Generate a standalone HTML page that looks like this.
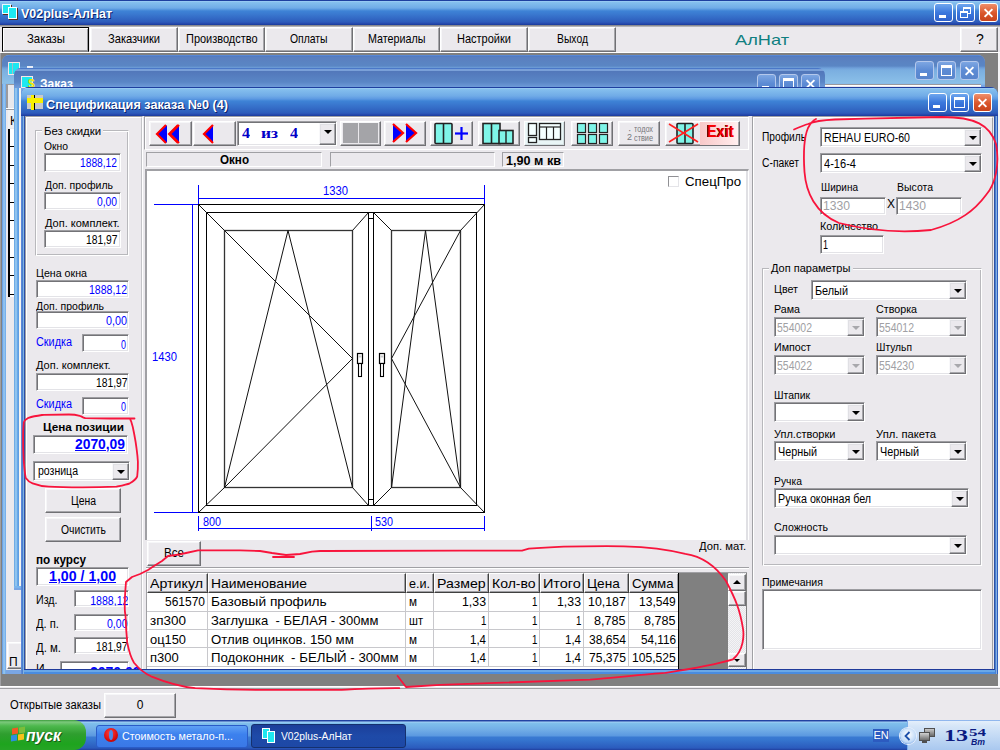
<!DOCTYPE html>
<html><head><meta charset="utf-8">
<style>

*{margin:0;padding:0;box-sizing:border-box}
html,body{width:1000px;height:750px;overflow:hidden;background:#808080;font-family:"Liberation Sans",sans-serif;font-size:11px;color:#000;position:relative}
.a{position:absolute}
.t{position:absolute;white-space:pre;line-height:1}
.face{background:#EBE9ED}
.fld{position:absolute;background:#fff;border:1px solid;border-color:#9d9da1 #fff #fff #9d9da1;box-shadow:inset 1px 1px #737377,inset -1px -1px #e3e3e7}
.btn{position:absolute;background:#EBE9ED;border:1px solid;border-color:#fff #707074 #707074 #fff;box-shadow:inset -1px -1px #a6a6aa,inset 1px 1px #f6f6f8}
.arr{position:absolute;top:1px;right:0;width:17px;bottom:0;background:#EBE9ED;border:1px solid;border-color:#f8f8fa #707074 #707074 #f8f8fa;box-shadow:inset -1px -1px #a6a6aa,inset 1px 1px #e0e0e4}
.arr:after{content:"";position:absolute;left:4px;top:6px;border-left:4px solid transparent;border-right:4px solid transparent;border-top:4px solid #000}
.arr.dis:after{border-top-color:#a8a8ac}
.grp{position:absolute;border:1px solid;border-color:#b8b8bc #fff #fff #b8b8bc;box-shadow:inset 1px 1px #fff,inset -1px -1px #b8b8bc}
.sunk{position:absolute;border:1px solid;border-color:#a0a0a4 #fff #fff #a0a0a4}
.rais{position:absolute;border:1px solid;border-color:#fff #a0a0a4 #a0a0a4 #fff}
.tb-act{background:linear-gradient(to bottom,#1E3F9F 0px,#1E3F9F 1px,#A6D3F7 1px,#86C0EE 2px,#70ABE7 8px,#3E83D6 11px,#3A79D0 14px,#2D5CBB 22px,#2A50B4 23px,#1A3B9C 25px)}
.capbtn{position:absolute;width:19px;height:19px;border:1px solid #fff;border-radius:3px;background:linear-gradient(to bottom,#6ea6ee,#3b78dd 50%,#2f62cc)}
.capbtn.cl{background:linear-gradient(to bottom,#f08f6a,#d9552b 55%,#c8441c)}
.capbtn.ina{border-color:#b4c8ec;background:linear-gradient(to bottom,#7da6e2,#5c8bd4 50%,#5885cc)}
.x:before,.x:after{content:"";position:absolute;left:3px;top:7.5px;width:11px;height:2px;background:#fff;transform:rotate(45deg)}
.x:after{transform:rotate(-45deg)}

</style></head><body>
<div class="a tb-act" style="left:0;top:0;width:1000px;height:25px"></div>
<div class="a" style="left:2px;top:4px;width:9px;height:10px;background:#1ee8f0;border:1px solid #e8f8ff;box-shadow:1px 1px #5a2a1a"></div>
<div class="a" style="left:8px;top:7px;width:9px;height:12px;background:#1ee8f0;border:1px solid #fff;box-shadow:1px 1px #5a2a1a"></div>
<div class="t" style="left:21px;top:8px;font:bold 12px/1 'Liberation Sans';color:#fff;transform:scaleX(1.040);transform-origin:0 0;text-shadow:1px 1px #0a1f6a;">V02plus-АлНат</div>
<div class="capbtn " style="left:934px;top:3px"><div class="a" style="left:4px;top:11px;width:7px;height:3px;background:#fff"></div></div>
<div class="capbtn " style="left:956px;top:3px"><div class="a" style="left:6px;top:3px;width:8px;height:7px;border:1px solid #fff;border-top-width:2px"></div><div class="a" style="left:3px;top:7px;width:8px;height:7px;border:1px solid #fff;border-top-width:2px;background:#3b78dd"></div></div>
<div class="capbtn cl x" style="left:979px;top:3px"></div>
<div class="a face" style="left:0;top:25px;width:1000px;height:28px"></div>
<div class="a" style="left:0;top:25px;width:1000px;height:1px;background:#8c8c90"></div>
<div class="a" style="left:0;top:26px;width:1000px;height:1px;background:#b4b4b8"></div>
<div class="a" style="left:0;top:52px;width:1000px;height:1px;background:#fff"></div>
<div class="btn" style="left:2px;top:27px;width:87px;height:25px;border-color:#000 #000 #8a8a8e #000;box-shadow:inset 1px 1px #fff,inset -1px -1px #9a9a9e"></div>
<div class="t" style="left:27.0px;top:32px;font:13px/1 'Liberation Sans';color:#000;transform:scaleX(0.875);transform-origin:0 0;">Заказы</div>
<div class="btn" style="left:90px;top:27px;width:88px;height:25px;"></div>
<div class="t" style="left:108.0px;top:32px;font:13px/1 'Liberation Sans';color:#000;transform:scaleX(0.857);transform-origin:0 0;">Заказчики</div>
<div class="btn" style="left:178px;top:27px;width:87px;height:25px;"></div>
<div class="t" style="left:185.8px;top:32px;font:13px/1 'Liberation Sans';color:#000;transform:scaleX(0.844);transform-origin:0 0;">Производство</div>
<div class="btn" style="left:265px;top:27px;width:88px;height:25px;"></div>
<div class="t" style="left:290.2px;top:32px;font:13px/1 'Liberation Sans';color:#000;transform:scaleX(0.800);transform-origin:0 0;">Оплаты</div>
<div class="btn" style="left:353px;top:27px;width:87px;height:25px;"></div>
<div class="t" style="left:367.8px;top:32px;font:13px/1 'Liberation Sans';color:#000;transform:scaleX(0.825);transform-origin:0 0;">Материалы</div>
<div class="btn" style="left:440px;top:27px;width:88px;height:25px;"></div>
<div class="t" style="left:457.0px;top:32px;font:13px/1 'Liberation Sans';color:#000;transform:scaleX(0.847);transform-origin:0 0;">Настройки</div>
<div class="btn" style="left:528px;top:27px;width:88px;height:25px;"></div>
<div class="t" style="left:556.5px;top:32px;font:13px/1 'Liberation Sans';color:#000;transform:scaleX(0.797);transform-origin:0 0;">Выход</div>
<div class="t" style="left:734.5px;top:32px;font:15px/1 'Liberation Sans';color:#0f7f80;transform:scaleX(1.214);transform-origin:0 0;">АлНат</div>
<div class="btn" style="left:960px;top:27px;width:38px;height:25px;"></div>
<div class="t" style="left:976.1px;top:32px;font:14px/1 'Liberation Sans';color:#000;">?</div>
<div class="a" style="left:0;top:53px;width:1000px;height:634px;background:#808080"></div>
<div class="a" style="left:998px;top:53px;width:2px;height:634px;background:#f4f4f6"></div>
<div class="a" style="left:0;top:53px;width:1px;height:634px;background:#a0a0a4"></div>
<div class="a" style="left:2px;top:55px;width:983px;height:619px;border-radius:7px 7px 0 0;background:#7aa6e4"></div>
<div class="a" style="left:2px;top:55px;width:983px;height:30px;border-radius:7px 7px 0 0;background:linear-gradient(to bottom,#6a9ae0 0,#4a78c8 1px,#5a7fbf 2px,#5a86c4 11px,#6fa0da 13px,#7aaee0 15px,#8bc0e8 28px,#7fb0e8 30px)"></div>
<div class="a" style="left:2px;top:84px;width:4px;height:590px;background:linear-gradient(to right,#5a94e0,#9ccbf2 50%,#6aa6e8)"></div>
<div class="a face" style="left:6px;top:84px;width:975px;height:586px;border-top:1px solid #9a9a9e"></div>
<div class="a" style="left:6px;top:85px;width:975px;height:1px;background:#fff"></div>
<div class="a" style="left:8px;top:62px;width:12px;height:13px;background:#1ee8f0;border:1px solid #f4e8e8"></div>
<div class="a" style="left:12px;top:63px;width:1px;height:11px;background:#a0c0c8"></div>
<div class="a" style="left:27px;top:66px;width:6px;height:2px;background:#e8eef8"></div>
<div class="capbtn ina" style="left:915px;top:61px"><div class="a" style="left:4px;top:11px;width:7px;height:3px;background:#fff"></div></div>
<div class="capbtn ina" style="left:937px;top:61px"><div class="a" style="left:3px;top:3px;width:11px;height:11px;border:1px solid #fff;border-top-width:3px"></div></div>
<div class="capbtn ina x" style="left:960px;top:61px"></div>
<div class="a" style="left:6px;top:85px;width:9px;height:23px;background:#e8e8ec;border-left:2px solid #9a9a9e"></div>
<div class="a" style="left:6px;top:108px;width:9px;height:1px;background:#fff"></div>
<div class="a" style="left:6px;top:109px;width:9px;height:1px;background:#9a9a9e"></div>
<div class="a" style="left:8px;top:110px;width:7px;height:18px;background:#f0f0f2"></div>
<div class="t" style="left:10px;top:115px;font:12px/1 'Liberation Sans';color:#000;">К</div>
<div class="a" style="left:8px;top:129px;width:7px;height:168px;background:#fff;border-left:2px solid #000;background-image:repeating-linear-gradient(to bottom,#fff 0,#fff 17.4px,#000 17.4px,#000 18.4px)"></div>
<div class="btn" style="left:7px;top:642px;width:16px;height:27px"></div>
<div class="t" style="left:9px;top:656px;font:12px/1 'Liberation Sans';color:#000;">П</div>
<div class="a" style="left:14px;top:68px;width:811px;height:522px;border-radius:7px 7px 0 0;background:#7aa6e4"></div>
<div class="a" style="left:14px;top:68px;width:811px;height:20px;border-radius:7px 7px 0 0;background:linear-gradient(to bottom,#4a78c8 0,#4a78c8 1px,#7aa0d8 1px,#7aa0d8 3px,#5277ba 3px,#5a86c6 14px,#6e9ad8 19px)"></div>
<div class="a" style="left:14px;top:88px;width:5px;height:499px;background:linear-gradient(to right,#5f9fe0,#a2d0f2 40%,#68a8e8 70%,#5a98e0)"></div>
<div class="a" style="left:19px;top:88px;width:2px;height:499px;background:#f6f4f0"></div>
<div class="a" style="left:14px;top:586px;width:7px;height:2px;background:#7ab4ec"></div>
<div class="a" style="left:21px;top:76px;width:12px;height:12px;background:#1ee8f0;border:1px solid #f4e8e8"></div>
<div class="t" style="left:28px;top:78px;font:bold 12px/1 'Liberation Sans';color:#f2e600;">$</div>
<div class="t" style="left:40px;top:77px;font:bold 13px/1 'Liberation Sans';color:#fff;transform:scaleX(0.923);transform-origin:0 0;">Заказ</div>
<div class="capbtn ina" style="left:757px;top:74px"><div class="a" style="left:4px;top:11px;width:7px;height:3px;background:#fff"></div></div>
<div class="capbtn ina" style="left:779px;top:74px"><div class="a" style="left:3px;top:3px;width:11px;height:11px;border:1px solid #fff;border-top-width:3px"></div></div>
<div class="capbtn ina x" style="left:801px;top:74px"></div>
<div class="a" style="left:21px;top:87px;width:977px;height:587px;border-radius:8px 8px 0 0;background:#3a6ad0"></div>
<div class="a" style="left:21px;top:112px;width:1px;height:562px;background:#5a88d8"></div>
<div class="a" style="left:22px;top:112px;width:1px;height:562px;background:#4a80d0"></div>
<div class="a" style="left:23px;top:112px;width:1px;height:562px;background:#82b2e2"></div>
<div class="a" style="left:24px;top:112px;width:1px;height:562px;background:#2a4ea8"></div>
<div class="a" style="left:994px;top:112px;width:1px;height:562px;background:#2e50a0"></div>
<div class="a" style="left:995px;top:112px;width:1px;height:562px;background:#4a80d0"></div>
<div class="a" style="left:996px;top:112px;width:1px;height:562px;background:#88b0e0"></div>
<div class="a" style="left:997px;top:112px;width:1px;height:562px;background:#3060c0"></div>
<div class="a" style="left:24px;top:669px;width:971px;height:1px;background:#1F3A9A"></div>
<div class="a" style="left:24px;top:670px;width:971px;height:1px;background:#6aa8e8"></div>
<div class="a" style="left:24px;top:671px;width:971px;height:1px;background:#6aa8e8"></div>
<div class="a" style="left:24px;top:672px;width:971px;height:1px;background:#4a8ce0"></div>
<div class="a" style="left:24px;top:673px;width:971px;height:1px;background:#4a8ce0"></div>
<div class="a" style="left:21px;top:87px;width:977px;height:29px;border-radius:8px 8px 0 0;background:linear-gradient(to bottom,#1E3F9F 0px,#1E3F9F 1px,#A6D3F7 1px,#86C0EE 2px,#70ABE7 9px,#5c98e2 12px,#3E83D6 14px,#3A79D0 17px,#2D5CBB 26px,#2A50B4 27px,#1A3B9C 29px)"></div>
<div class="a face" style="left:25px;top:116px;width:969px;height:553px"></div>
<div class="a" style="left:27px;top:95px;width:16px;height:14px;background:#c8c8c8"></div>
<div class="a" style="left:34px;top:95px;width:1px;height:15px;background:#000"></div>
<div class="a" style="left:31px;top:95px;width:3px;height:15px;background:#f8f000"></div>
<div class="a" style="left:27px;top:98px;width:16px;height:5px;background:#f8f000"></div>
<div class="t" style="left:46px;top:98px;font:bold 13px/1 'Liberation Sans';color:#fff;transform:scaleX(0.976);transform-origin:0 0;text-shadow:1px 1px #0a1f6a;">Спецификация заказа №0 (4)</div>
<div class="capbtn " style="left:928px;top:93px"><div class="a" style="left:4px;top:11px;width:7px;height:3px;background:#fff"></div></div>
<div class="capbtn " style="left:950px;top:93px"><div class="a" style="left:3px;top:3px;width:11px;height:11px;border:1px solid #fff;border-top-width:3px"></div></div>
<div class="capbtn cl x" style="left:973px;top:93px"></div>
<div class="a" style="left:25px;top:116px;width:118px;height:553px;border-left:1px solid #a0a0a4;border-top:1px solid #a0a0a4;border-right:1px solid #fff"></div>
<div class="a" style="left:26px;top:117px;width:116px;height:552px;border-left:1px solid #fff;border-top:1px solid #fff;border-right:1px solid #c4c4c8"></div>
<div class="grp" style="left:35px;top:130px;width:94px;height:126px"></div>
<div class="a face" style="left:42px;top:125px;width:61px;height:10px"></div>
<div class="t" style="left:44px;top:126px;font:11px/1 'Liberation Sans';color:#000;transform:scaleX(1.036);transform-origin:0 0;">Без скидки</div>
<div class="t" style="left:44px;top:141px;font:11px/1 'Liberation Sans';color:#000;transform:scaleX(0.939);transform-origin:0 0;">Окно</div>
<div class="fld" style="left:44px;top:153px;width:77px;height:19px;"></div>
<div class="t" style="left:80.0px;top:157px;font:12px/1 'Liberation Sans';color:#0000ff;transform:scaleX(0.853);transform-origin:0 0;">1888,12</div>
<div class="t" style="left:45px;top:180px;font:11px/1 'Liberation Sans';color:#000;transform:scaleX(0.954);transform-origin:0 0;">Доп. профиль</div>
<div class="fld" style="left:44px;top:192px;width:77px;height:18px;"></div>
<div class="t" style="left:97.0px;top:195.5px;font:12px/1 'Liberation Sans';color:#0000ff;transform:scaleX(0.856);transform-origin:0 0;">0,00</div>
<div class="t" style="left:45px;top:218px;font:11px/1 'Liberation Sans';color:#000;">Доп. комплект.</div>
<div class="fld" style="left:44px;top:230px;width:77px;height:18px;"></div>
<div class="t" style="left:85.5px;top:233.5px;font:12px/1 'Liberation Sans';color:#000;transform:scaleX(0.858);transform-origin:0 0;">181,97</div>
<div class="t" style="left:36px;top:268px;font:11px/1 'Liberation Sans';color:#000;transform:scaleX(0.969);transform-origin:0 0;">Цена окна</div>
<div class="fld" style="left:36px;top:280px;width:93px;height:18px;"></div>
<div class="t" style="left:88.5px;top:283.5px;font:12px/1 'Liberation Sans';color:#0000ff;transform:scaleX(0.876);transform-origin:0 0;">1888,12</div>
<div class="t" style="left:36px;top:300.5px;font:11px/1 'Liberation Sans';color:#000;transform:scaleX(0.954);transform-origin:0 0;">Доп. профиль</div>
<div class="fld" style="left:36px;top:311px;width:93px;height:18px;"></div>
<div class="t" style="left:105.5px;top:314.5px;font:12px/1 'Liberation Sans';color:#0000ff;transform:scaleX(0.899);transform-origin:0 0;">0,00</div>
<div class="t" style="left:36px;top:335.5px;font:12px/1 'Liberation Sans';color:#0000ff;transform:scaleX(0.904);transform-origin:0 0;">Скидка</div>
<div class="fld" style="left:82px;top:334px;width:47px;height:18px;"></div>
<div class="t" style="left:121.0px;top:338.5px;font:12px/1 'Liberation Sans';color:#0000ff;transform:scaleX(0.748);transform-origin:0 0;">0</div>
<div class="t" style="left:36px;top:359.5px;font:11px/1 'Liberation Sans';color:#000;">Доп. комплект.</div>
<div class="fld" style="left:36px;top:373px;width:93px;height:18px;"></div>
<div class="t" style="left:95.5px;top:377px;font:12px/1 'Liberation Sans';color:#000;transform:scaleX(0.858);transform-origin:0 0;">181,97</div>
<div class="t" style="left:36px;top:398px;font:12px/1 'Liberation Sans';color:#0000ff;transform:scaleX(0.904);transform-origin:0 0;">Скидка</div>
<div class="fld" style="left:82px;top:397px;width:47px;height:18px;"></div>
<div class="t" style="left:121.0px;top:400.5px;font:12px/1 'Liberation Sans';color:#0000ff;transform:scaleX(0.748);transform-origin:0 0;">0</div>
<div class="t" style="left:43px;top:422px;font:bold 11px/1 'Liberation Sans';color:#000;transform:scaleX(1.068);transform-origin:0 0;">Цена позиции</div>
<div class="fld" style="left:33px;top:435px;width:95px;height:19px;"></div>
<div class="t" style="left:75.0px;top:436.5px;font:bold 14px/1 'Liberation Sans';color:#0000ff;transform:scaleX(0.988);transform-origin:0 0;text-decoration:underline;">2070,09</div>
<div class="fld" style="left:33px;top:461px;width:97px;height:20px"><div class="arr"></div></div>
<div class="t" style="left:38px;top:465px;font:12px/1 'Liberation Sans';color:#000;transform:scaleX(0.877);transform-origin:0 0;">розница</div>
<div class="btn" style="left:45px;top:488px;width:76px;height:25px;"></div>
<div class="t" style="left:70.5px;top:495px;font:12px/1 'Liberation Sans';color:#000;transform:scaleX(0.866);transform-origin:0 0;">Цена</div>
<div class="btn" style="left:45px;top:517px;width:76px;height:25px;"></div>
<div class="t" style="left:60.5px;top:524px;font:12px/1 'Liberation Sans';color:#000;transform:scaleX(0.861);transform-origin:0 0;">Очистить</div>
<div class="t" style="left:36px;top:554px;font:bold 12px/1 'Liberation Sans';color:#000;transform:scaleX(0.978);transform-origin:0 0;">по курсу</div>
<div class="fld" style="left:36px;top:567px;width:93px;height:19px;"></div>
<div class="t" style="left:49.0px;top:569px;font:bold 14px/1 'Liberation Sans';color:#0000ff;transform:scaleX(1.013);transform-origin:0 0;text-decoration:underline;">1,00 / 1,00</div>
<div class="t" style="left:36px;top:594px;font:12px/1 'Liberation Sans';color:#000;transform:scaleX(0.888);transform-origin:0 0;">Изд.</div>
<div class="fld" style="left:74px;top:590px;width:55px;height:17px;"></div>
<div class="a" style="left:76px;top:592px;width:52px;height:14px;overflow:hidden"><div class="t" style="right:0;top:2px;font:12px Liberation Sans;color:#00f;transform:scaleX(0.88);transform-origin:100% 0">1888,12</div></div>
<div class="t" style="left:36px;top:618px;font:12px/1 'Liberation Sans';color:#000;transform:scaleX(0.933);transform-origin:0 0;">Д. п.</div>
<div class="fld" style="left:74px;top:614px;width:55px;height:17px;"></div>
<div class="t" style="left:106.5px;top:617.5px;font:12px/1 'Liberation Sans';color:#0000ff;transform:scaleX(0.878);transform-origin:0 0;">0,00</div>
<div class="t" style="left:36px;top:642px;font:12px/1 'Liberation Sans';color:#000;transform:scaleX(0.947);transform-origin:0 0;">Д. м.</div>
<div class="fld" style="left:74px;top:637px;width:55px;height:17px;"></div>
<div class="t" style="left:95.5px;top:641px;font:12px/1 'Liberation Sans';color:#000;transform:scaleX(0.858);transform-origin:0 0;">181,97</div>
<div class="a" style="left:25px;top:658px;width:118px;height:11px;overflow:hidden"><div class="t" style="left:11px;top:4px;font:12px Liberation Sans">И</div><div class="fld" style="left:35px;top:3px;width:69px;height:17px"></div><div class="t" style="left:65px;top:6px;font:bold 14px Liberation Sans;color:#00f">2070,09</div></div>
<div class="a" style="left:144px;top:116px;width:605px;height:34px;border-left:1px solid #a0a0a4;border-top:1px solid #a0a0a4;border-right:1px solid #fff;border-bottom:1px solid #fff"></div>
<div class="a" style="left:145px;top:117px;width:603px;height:32px;border-left:1px solid #fff;border-top:1px solid #fff"></div>
<div class="btn" style="left:149px;top:121px;width:43px;height:25px;"></div>
<div class="btn" style="left:193px;top:121px;width:43px;height:25px;"></div>
<svg class="a" style="left:152px;top:121px" width="40" height="25" viewBox="0 0 40 25"><polygon points="26,4 26,22 17,13" fill="#0000ff"/><polyline points="26,4 17,13 26,22" fill="none" stroke="#ff0000" stroke-width="2"/><polygon points="39,4 39,22 30,13" fill="#0000ff" transform="translate(-24,0)"/></svg>
<svg class="a" style="left:149px;top:121px" width="43" height="25" viewBox="0 0 43 25"><polygon points="17,4 17,22 8,13" fill="#0000ff"/><polyline points="17,4 8,13 17,22" fill="none" stroke="#ff0000" stroke-width="2.2"/><polygon points="30,4 30,22 21,13" fill="#0000ff"/><polyline points="30,4 21,13 30,22" fill="none" stroke="#ff0000" stroke-width="2.2"/></svg>
<svg class="a" style="left:193px;top:121px" width="43" height="25" viewBox="0 0 43 25"><polygon points="20,4 20,22 11,13" fill="#0000ff"/><polyline points="20,4 11,13 20,22" fill="none" stroke="#ff0000" stroke-width="2.2"/></svg>
<div class="fld" style="left:237px;top:121px;width:100px;height:25px"><div class="arr" style="width:17px"></div></div>
<div class="t" style="left:242px;top:127px;font:bold 14px/1 'Liberation Serif';color:#0000c8;transform:scaleX(1.143);transform-origin:0 0;">4</div>
<div class="t" style="left:261px;top:126.5px;font:bold 14px/1 'Liberation Serif';color:#0000c8;transform:scaleX(1.241);transform-origin:0 0;">из</div>
<div class="t" style="left:290px;top:127px;font:bold 14px/1 'Liberation Serif';color:#0000c8;transform:scaleX(1.143);transform-origin:0 0;">4</div>
<div class="btn" style="left:340px;top:121px;width:41px;height:25px;"></div>
<div class="a" style="left:343px;top:123px;width:15px;height:20px;background:#a4a4a8"></div>
<div class="a" style="left:359px;top:123px;width:19px;height:20px;background:#a4a4a8"></div>
<div class="btn" style="left:384px;top:121px;width:42px;height:25px;"></div>
<svg class="a" style="left:384px;top:121px" width="42" height="25" viewBox="0 0 42 25"><polygon points="9,3 9,21 19,12" fill="#0000ff"/><polyline points="9,3 19,12 9,21" fill="none" stroke="#ff0000" stroke-width="2.2"/><polygon points="22,3 22,21 32,12" fill="#0000ff"/><polyline points="22,3 32,12 22,21" fill="none" stroke="#ff0000" stroke-width="2.2"/></svg>
<div class="btn" style="left:430px;top:121px;width:43px;height:25px;"></div>
<svg class="a" style="left:430px;top:121px" width="43" height="25" viewBox="0 0 43 25"><rect x="5" y="2.5" width="17" height="20" fill="#7ff5e8" stroke="#222" stroke-width="1.6" rx="1"/><line x1="13.5" y1="2.5" x2="13.5" y2="22.5" stroke="#222" stroke-width="1.6"/><line x1="25" y1="12.5" x2="38" y2="12.5" stroke="#0000ff" stroke-width="2.2"/><line x1="31.5" y1="6" x2="31.5" y2="19" stroke="#0000ff" stroke-width="2.2"/></svg>
<div class="btn" style="left:478px;top:121px;width:42px;height:25px;"></div>
<svg class="a" style="left:478px;top:121px" width="42" height="25" viewBox="0 0 42 25"><rect x="5" y="2.5" width="17" height="20" fill="#7ff5e8" stroke="#222" stroke-width="1.6"/><line x1="13.5" y1="2.5" x2="13.5" y2="22.5" stroke="#222" stroke-width="1.6"/><rect x="21" y="9.5" width="14" height="13" fill="#7ff5e8" stroke="#222" stroke-width="1.6"/><line x1="28" y1="9.5" x2="28" y2="22.5" stroke="#222" stroke-width="1.4"/></svg>
<div class="btn" style="left:524px;top:121px;width:41px;height:25px;"></div>
<svg class="a" style="left:524px;top:121px" width="41" height="25" viewBox="0 0 41 25"><rect x="1" y="1" width="39" height="23" fill="#e8fafa" opacity="0.7"/><rect x="4.5" y="2.5" width="8" height="12" fill="#f4ffff" stroke="#222" stroke-width="1.3"/><rect x="4.5" y="16.5" width="8" height="5" fill="#f4ffff" stroke="#222" stroke-width="1.3"/><rect x="15.5" y="2.5" width="21" height="16" fill="#f4ffff" stroke="#222" stroke-width="1.3"/><line x1="15.5" y1="6" x2="36.5" y2="6" stroke="#222" stroke-width="1.2"/><line x1="22.5" y1="6" x2="22.5" y2="18.5" stroke="#222" stroke-width="1.2"/><line x1="29.5" y1="6" x2="29.5" y2="18.5" stroke="#222" stroke-width="1.2"/></svg>
<div class="btn" style="left:571px;top:121px;width:42px;height:25px;"></div>
<svg class="a" style="left:571px;top:121px" width="42" height="25" viewBox="0 0 42 25"><rect x="6.5" y="2.5" width="8" height="9" fill="#7ff5e8" stroke="#222" stroke-width="1.2"/><rect x="17.5" y="2.5" width="8" height="9" fill="#7ff5e8" stroke="#222" stroke-width="1.2"/><rect x="28.5" y="2.5" width="8" height="9" fill="#7ff5e8" stroke="#222" stroke-width="1.2"/><rect x="6.5" y="13.5" width="8" height="9" fill="#7ff5e8" stroke="#222" stroke-width="1.2"/><rect x="17.5" y="13.5" width="8" height="9" fill="#7ff5e8" stroke="#222" stroke-width="1.2"/><rect x="28.5" y="13.5" width="8" height="9" fill="#7ff5e8" stroke="#222" stroke-width="1.2"/></svg>
<div class="btn" style="left:618px;top:121px;width:42px;height:25px;"></div>
<div class="t" style="left:628px;top:126px;font:10px/1 'Liberation Sans';color:#76767a;">·</div>
<div class="t" style="left:634px;top:125px;font:9px/1 'Liberation Sans';color:#76767a;transform:scaleX(0.809);transform-origin:0 0;">тодох</div>
<div class="t" style="left:627px;top:133px;font:9px/1 'Liberation Sans';color:#76767a;">2</div>
<div class="t" style="left:634px;top:134px;font:9px/1 'Liberation Sans';color:#76767a;transform:scaleX(0.811);transform-origin:0 0;">ствие</div>
<div class="btn" style="left:665px;top:121px;width:75px;height:25px;"></div>
<div class="a" style="left:700px;top:122px;width:38px;height:23px;background:linear-gradient(to right,#f8c8c8,#ffe6e6 80%,#fff0f0)"></div>
<svg class="a" style="left:665px;top:121px" width="36" height="25" viewBox="0 0 36 25"><rect x="12" y="2.5" width="16" height="20" fill="#7ff5e8" stroke="#222" stroke-width="1.6" rx="1"/><line x1="20" y1="2.5" x2="20" y2="22.5" stroke="#222" stroke-width="1.6"/><line x1="4" y1="3" x2="33" y2="21" stroke="#ff2020" stroke-width="1.6"/><line x1="33" y1="3" x2="4" y2="21" stroke="#ff2020" stroke-width="1.6"/></svg>
<div class="t" style="left:707px;top:124px;font:bold 16px/1 'Liberation Sans';color:#ff0000;transform:scaleX(0.920);transform-origin:0 0;text-shadow:-1px 0 #300;">Exit</div>
<div class="sunk" style="left:146px;top:152px;width:176px;height:15px"></div>
<div class="t" style="left:219.5px;top:154px;font:bold 12px/1 'Liberation Sans';color:#000;transform:scaleX(0.969);transform-origin:0 0;">Окно</div>
<div class="sunk" style="left:330px;top:152px;width:165px;height:15px"></div>
<div class="sunk" style="left:502px;top:152px;width:62px;height:15px"></div>
<div class="t" style="left:506px;top:154.5px;font:bold 12px/1 'Liberation Sans';color:#000;transform:scaleX(1.052);transform-origin:0 0;">1,90 м кв</div>
<div class="a" style="left:145px;top:169px;width:604px;height:371px;background:#fff;border-left:2px solid #a0a0a4;border-top:2px solid #a0a0a4;border-right:1px solid #fff"></div>
<div class="a" style="left:746px;top:171px;width:2px;height:369px;background:#e0e0e4"></div>
<svg class="a" style="left:0;top:0" width="1000" height="750" viewBox="0 0 1000 750"><line x1="198.5" y1="185" x2="198.5" y2="205" stroke="#0000ff" stroke-width="1"/><line x1="484.5" y1="185" x2="484.5" y2="205" stroke="#0000ff" stroke-width="1"/><line x1="198" y1="198.5" x2="485" y2="198.5" stroke="#0000ff" stroke-width="1"/><line x1="154" y1="204.5" x2="199" y2="204.5" stroke="#0000ff" stroke-width="1"/><line x1="192.5" y1="204" x2="192.5" y2="512" stroke="#0000ff" stroke-width="1"/><line x1="154" y1="512.5" x2="199" y2="512.5" stroke="#0000ff" stroke-width="1"/><line x1="198.5" y1="516" x2="198.5" y2="531" stroke="#0000ff" stroke-width="1"/><line x1="371.5" y1="516" x2="371.5" y2="531" stroke="#0000ff" stroke-width="1"/><line x1="484.5" y1="516" x2="484.5" y2="531" stroke="#0000ff" stroke-width="1"/><line x1="198" y1="528.5" x2="485" y2="528.5" stroke="#0000ff" stroke-width="1"/><rect x="198.5" y="204.5" width="286.0" height="308.0" fill="none" stroke="#000" stroke-width="1"/><rect x="206.5" y="212.5" width="270.0" height="293.0" fill="none" stroke="#000" stroke-width="1"/><line x1="368.5" y1="212" x2="368.5" y2="506" stroke="#000" stroke-width="1"/><line x1="373.5" y1="212" x2="373.5" y2="506" stroke="#000" stroke-width="1"/><line x1="369" y1="218.5" x2="373" y2="218.5" stroke="#000" stroke-width="1"/><line x1="369" y1="499.5" x2="373" y2="499.5" stroke="#000" stroke-width="1"/><rect x="224.5" y="230.5" width="128.0" height="257.0" fill="none" stroke="#333" stroke-width="1.3"/><rect x="391.5" y="230.5" width="69.0" height="257.0" fill="none" stroke="#333" stroke-width="1.3"/><line x1="198.5" y1="204.5" x2="224.5" y2="230.5" stroke="#111" stroke-width="1"/><line x1="484.5" y1="204.5" x2="460.5" y2="230.5" stroke="#111" stroke-width="1"/><line x1="198.5" y1="512.5" x2="224.5" y2="487.5" stroke="#111" stroke-width="1"/><line x1="484.5" y1="512.5" x2="460.5" y2="487.5" stroke="#111" stroke-width="1"/><line x1="368.5" y1="212.5" x2="352.5" y2="230.5" stroke="#111" stroke-width="1"/><line x1="373.5" y1="212.5" x2="391.5" y2="230.5" stroke="#111" stroke-width="1"/><line x1="368.5" y1="505.5" x2="352.5" y2="487.5" stroke="#111" stroke-width="1"/><line x1="373.5" y1="505.5" x2="391.5" y2="487.5" stroke="#111" stroke-width="1"/><polyline points="224.5,230.5 352.5,358.5 224.5,487.5" fill="none" stroke="#111" stroke-width="1"/><polyline points="224.5,487.5 288,230.5 352.5,487.5" fill="none" stroke="#111" stroke-width="1"/><polyline points="460.5,230.5 391.5,358.5 460.5,487.5" fill="none" stroke="#111" stroke-width="1"/><polyline points="391.5,487.5 425.5,230.5 460.5,487.5" fill="none" stroke="#111" stroke-width="1"/><rect x="357.5" y="353.5" width="5" height="10" fill="#fff" stroke="#000" stroke-width="1.2"/><rect x="358.5" y="355.5" width="3" height="2" fill="#ccc" stroke="none"/><rect x="358.5" y="363.5" width="3" height="13" fill="#fff" stroke="#000" stroke-width="1.1"/><rect x="379.5" y="353.5" width="5" height="10" fill="#fff" stroke="#000" stroke-width="1.2"/><rect x="380.5" y="355.5" width="3" height="2" fill="#ccc" stroke="none"/><rect x="380.5" y="363.5" width="3" height="13" fill="#fff" stroke="#000" stroke-width="1.1"/></svg>
<div class="t" style="left:323.0px;top:185px;font:12px/1 'Liberation Sans';color:#0000ff;transform:scaleX(0.936);transform-origin:0 0;">1330</div>
<div class="t" style="left:152px;top:351px;font:12px/1 'Liberation Sans';color:#0000ff;transform:scaleX(0.936);transform-origin:0 0;">1430</div>
<div class="t" style="left:203px;top:516px;font:12px/1 'Liberation Sans';color:#0000ff;transform:scaleX(0.899);transform-origin:0 0;">800</div>
<div class="t" style="left:375px;top:516px;font:12px/1 'Liberation Sans';color:#0000ff;transform:scaleX(0.899);transform-origin:0 0;">530</div>
<div class="a" style="left:668px;top:176px;width:11px;height:11px;background:#fff;border:1px solid;border-color:#909094 #e4e4e8 #e4e4e8 #909094"></div>
<div class="t" style="left:685px;top:176px;font:12px/1 'Liberation Sans';color:#000;transform:scaleX(1.105);transform-origin:0 0;">СпецПро</div>
<div class="btn" style="left:147px;top:541px;width:54px;height:25px;"></div>
<div class="t" style="left:164.0px;top:547px;font:12px/1 'Liberation Sans';color:#000;transform:scaleX(0.967);transform-origin:0 0;">Все</div>
<div class="t" style="left:699.0px;top:541px;font:11px/1 'Liberation Sans';color:#000;transform:scaleX(1.020);transform-origin:0 0;">Доп. мат.</div>
<div class="a" style="left:146px;top:567px;width:603px;height:1px;background:#a0a0a4"></div>
<div class="a" style="left:146px;top:568px;width:603px;height:1px;background:#fff"></div>
<div class="a" style="left:146px;top:572px;width:601px;height:97px;background:#808080;border-left:1px solid #a0a0a4;border-top:1px solid #a0a0a4"></div>
<div class="a" style="left:147px;top:573px;width:532px;height:96px;background:#fff"></div>
<div class="a" style="left:147px;top:573px;width:61px;height:20px;background:#EBE9ED;border:1px solid;border-color:#fff #404040 #404040 #fff;box-shadow:inset -1px -1px #a0a0a4"></div>
<div class="t" style="left:150px;top:577px;font:13px/1 'Liberation Sans';color:#000;transform:scaleX(1.093);transform-origin:0 0;">Артикул</div>
<div class="a" style="left:208px;top:573px;width:198px;height:20px;background:#EBE9ED;border:1px solid;border-color:#fff #404040 #404040 #fff;box-shadow:inset -1px -1px #a0a0a4"></div>
<div class="t" style="left:211px;top:577px;font:13px/1 'Liberation Sans';color:#000;transform:scaleX(1.065);transform-origin:0 0;">Наименование</div>
<div class="a" style="left:406px;top:573px;width:28px;height:20px;background:#EBE9ED;border:1px solid;border-color:#fff #404040 #404040 #fff;box-shadow:inset -1px -1px #a0a0a4"></div>
<div class="t" style="left:409px;top:577px;font:13px/1 'Liberation Sans';color:#000;transform:scaleX(0.967);transform-origin:0 0;">е.и.</div>
<div class="a" style="left:434px;top:573px;width:55px;height:20px;background:#EBE9ED;border:1px solid;border-color:#fff #404040 #404040 #fff;box-shadow:inset -1px -1px #a0a0a4"></div>
<div class="t" style="left:437px;top:577px;font:13px/1 'Liberation Sans';color:#000;transform:scaleX(1.088);transform-origin:0 0;">Размер</div>
<div class="a" style="left:489px;top:573px;width:51px;height:20px;background:#EBE9ED;border:1px solid;border-color:#fff #404040 #404040 #fff;box-shadow:inset -1px -1px #a0a0a4"></div>
<div class="t" style="left:492px;top:577px;font:13px/1 'Liberation Sans';color:#000;transform:scaleX(1.079);transform-origin:0 0;">Кол-во</div>
<div class="a" style="left:540px;top:573px;width:44px;height:20px;background:#EBE9ED;border:1px solid;border-color:#fff #404040 #404040 #fff;box-shadow:inset -1px -1px #a0a0a4"></div>
<div class="t" style="left:543px;top:577px;font:13px/1 'Liberation Sans';color:#000;transform:scaleX(1.109);transform-origin:0 0;">Итого</div>
<div class="a" style="left:584px;top:573px;width:45px;height:20px;background:#EBE9ED;border:1px solid;border-color:#fff #404040 #404040 #fff;box-shadow:inset -1px -1px #a0a0a4"></div>
<div class="t" style="left:587px;top:577px;font:13px/1 'Liberation Sans';color:#000;transform:scaleX(1.049);transform-origin:0 0;">Цена</div>
<div class="a" style="left:629px;top:573px;width:50px;height:20px;background:#EBE9ED;border:1px solid;border-color:#fff #404040 #404040 #fff;box-shadow:inset -1px -1px #a0a0a4"></div>
<div class="t" style="left:632px;top:577px;font:13px/1 'Liberation Sans';color:#000;transform:scaleX(1.018);transform-origin:0 0;">Сумма</div>
<div class="a" style="left:147px;top:593px;width:61px;height:19px;border-right:1px solid #c8c8cc;border-bottom:1px solid #c8c8cc"></div>
<div class="t" style="left:165.0px;top:595px;font:13px/1 'Liberation Sans';color:#000;transform:scaleX(0.922);transform-origin:0 0;">561570</div>
<div class="a" style="left:208px;top:593px;width:198px;height:19px;border-right:1px solid #c8c8cc;border-bottom:1px solid #c8c8cc"></div>
<div class="t" style="left:211px;top:595px;font:13px/1 'Liberation Sans';color:#000;transform:scaleX(1.056);transform-origin:0 0;">Базовый профиль</div>
<div class="a" style="left:406px;top:593px;width:28px;height:19px;border-right:1px solid #c8c8cc;border-bottom:1px solid #c8c8cc"></div>
<div class="t" style="left:409px;top:595px;font:13px/1 'Liberation Sans';color:#000;transform:scaleX(0.895);transform-origin:0 0;">м</div>
<div class="a" style="left:434px;top:593px;width:55px;height:19px;border-right:1px solid #c8c8cc;border-bottom:1px solid #c8c8cc"></div>
<div class="t" style="left:462.0px;top:595px;font:13px/1 'Liberation Sans';color:#000;transform:scaleX(0.948);transform-origin:0 0;">1,33</div>
<div class="a" style="left:489px;top:593px;width:51px;height:19px;border-right:1px solid #c8c8cc;border-bottom:1px solid #c8c8cc"></div>
<div class="t" style="left:531.6px;top:595px;font:13px/1 'Liberation Sans';color:#000;transform:scaleX(0.746);transform-origin:0 0;">1</div>
<div class="a" style="left:540px;top:593px;width:44px;height:19px;border-right:1px solid #c8c8cc;border-bottom:1px solid #c8c8cc"></div>
<div class="t" style="left:557.0px;top:595px;font:13px/1 'Liberation Sans';color:#000;transform:scaleX(0.948);transform-origin:0 0;">1,33</div>
<div class="a" style="left:584px;top:593px;width:45px;height:19px;border-right:1px solid #c8c8cc;border-bottom:1px solid #c8c8cc"></div>
<div class="t" style="left:588.2px;top:595px;font:13px/1 'Liberation Sans';color:#000;transform:scaleX(0.951);transform-origin:0 0;">10,187</div>
<div class="a" style="left:629px;top:593px;width:50px;height:19px;border-right:1px solid #c8c8cc;border-bottom:1px solid #c8c8cc"></div>
<div class="t" style="left:639.2px;top:595px;font:13px/1 'Liberation Sans';color:#000;transform:scaleX(0.925);transform-origin:0 0;">13,549</div>
<div class="a" style="left:147px;top:611px;width:61px;height:19px;border-right:1px solid #c8c8cc;border-bottom:1px solid #c8c8cc"></div>
<div class="t" style="left:150px;top:614px;font:13px/1 'Liberation Sans';color:#000;transform:scaleX(1.037);transform-origin:0 0;">зп300</div>
<div class="a" style="left:208px;top:611px;width:198px;height:19px;border-right:1px solid #c8c8cc;border-bottom:1px solid #c8c8cc"></div>
<div class="t" style="left:211px;top:614px;font:13px/1 'Liberation Sans';color:#000;">Заглушка  - БЕЛАЯ - 300мм</div>
<div class="a" style="left:406px;top:611px;width:28px;height:19px;border-right:1px solid #c8c8cc;border-bottom:1px solid #c8c8cc"></div>
<div class="t" style="left:409px;top:614px;font:13px/1 'Liberation Sans';color:#000;transform:scaleX(0.854);transform-origin:0 0;">шт</div>
<div class="a" style="left:434px;top:611px;width:55px;height:19px;border-right:1px solid #c8c8cc;border-bottom:1px solid #c8c8cc"></div>
<div class="t" style="left:480.6px;top:614px;font:13px/1 'Liberation Sans';color:#000;transform:scaleX(0.746);transform-origin:0 0;">1</div>
<div class="a" style="left:489px;top:611px;width:51px;height:19px;border-right:1px solid #c8c8cc;border-bottom:1px solid #c8c8cc"></div>
<div class="t" style="left:531.6px;top:614px;font:13px/1 'Liberation Sans';color:#000;transform:scaleX(0.746);transform-origin:0 0;">1</div>
<div class="a" style="left:540px;top:611px;width:44px;height:19px;border-right:1px solid #c8c8cc;border-bottom:1px solid #c8c8cc"></div>
<div class="t" style="left:575.6px;top:614px;font:13px/1 'Liberation Sans';color:#000;transform:scaleX(0.746);transform-origin:0 0;">1</div>
<div class="a" style="left:584px;top:611px;width:45px;height:19px;border-right:1px solid #c8c8cc;border-bottom:1px solid #c8c8cc"></div>
<div class="t" style="left:594.4px;top:614px;font:13px/1 'Liberation Sans';color:#000;transform:scaleX(0.971);transform-origin:0 0;">8,785</div>
<div class="a" style="left:629px;top:611px;width:50px;height:19px;border-right:1px solid #c8c8cc;border-bottom:1px solid #c8c8cc"></div>
<div class="t" style="left:644.4px;top:614px;font:13px/1 'Liberation Sans';color:#000;transform:scaleX(0.971);transform-origin:0 0;">8,785</div>
<div class="a" style="left:147px;top:629px;width:61px;height:19px;border-right:1px solid #c8c8cc;border-bottom:1px solid #c8c8cc"></div>
<div class="t" style="left:150px;top:632.5px;font:13px/1 'Liberation Sans';color:#000;transform:scaleX(0.990);transform-origin:0 0;">оц150</div>
<div class="a" style="left:208px;top:629px;width:198px;height:19px;border-right:1px solid #c8c8cc;border-bottom:1px solid #c8c8cc"></div>
<div class="t" style="left:211px;top:632.5px;font:13px/1 'Liberation Sans';color:#000;transform:scaleX(1.015);transform-origin:0 0;">Отлив оцинков. 150 мм</div>
<div class="a" style="left:406px;top:629px;width:28px;height:19px;border-right:1px solid #c8c8cc;border-bottom:1px solid #c8c8cc"></div>
<div class="t" style="left:409px;top:632.5px;font:13px/1 'Liberation Sans';color:#000;transform:scaleX(0.895);transform-origin:0 0;">м</div>
<div class="a" style="left:434px;top:629px;width:55px;height:19px;border-right:1px solid #c8c8cc;border-bottom:1px solid #c8c8cc"></div>
<div class="t" style="left:470.0px;top:632.5px;font:13px/1 'Liberation Sans';color:#000;transform:scaleX(0.885);transform-origin:0 0;">1,4</div>
<div class="a" style="left:489px;top:629px;width:51px;height:19px;border-right:1px solid #c8c8cc;border-bottom:1px solid #c8c8cc"></div>
<div class="t" style="left:531.6px;top:632.5px;font:13px/1 'Liberation Sans';color:#000;transform:scaleX(0.746);transform-origin:0 0;">1</div>
<div class="a" style="left:540px;top:629px;width:44px;height:19px;border-right:1px solid #c8c8cc;border-bottom:1px solid #c8c8cc"></div>
<div class="t" style="left:565.0px;top:632.5px;font:13px/1 'Liberation Sans';color:#000;transform:scaleX(0.885);transform-origin:0 0;">1,4</div>
<div class="a" style="left:584px;top:629px;width:45px;height:19px;border-right:1px solid #c8c8cc;border-bottom:1px solid #c8c8cc"></div>
<div class="t" style="left:589.0px;top:632.5px;font:13px/1 'Liberation Sans';color:#000;transform:scaleX(0.930);transform-origin:0 0;">38,654</div>
<div class="a" style="left:629px;top:629px;width:50px;height:19px;border-right:1px solid #c8c8cc;border-bottom:1px solid #c8c8cc"></div>
<div class="t" style="left:641.0px;top:632.5px;font:13px/1 'Liberation Sans';color:#000;transform:scaleX(0.902);transform-origin:0 0;">54,116</div>
<div class="a" style="left:147px;top:647px;width:61px;height:20px;border-right:1px solid #c8c8cc;border-bottom:1px solid #c8c8cc"></div>
<div class="t" style="left:150px;top:650.5px;font:13px/1 'Liberation Sans';color:#000;">п300</div>
<div class="a" style="left:208px;top:647px;width:198px;height:20px;border-right:1px solid #c8c8cc;border-bottom:1px solid #c8c8cc"></div>
<div class="t" style="left:211px;top:650.5px;font:13px/1 'Liberation Sans';color:#000;transform:scaleX(1.018);transform-origin:0 0;">Подоконник  - БЕЛЫЙ - 300мм</div>
<div class="a" style="left:406px;top:647px;width:28px;height:20px;border-right:1px solid #c8c8cc;border-bottom:1px solid #c8c8cc"></div>
<div class="t" style="left:409px;top:650.5px;font:13px/1 'Liberation Sans';color:#000;transform:scaleX(0.895);transform-origin:0 0;">м</div>
<div class="a" style="left:434px;top:647px;width:55px;height:20px;border-right:1px solid #c8c8cc;border-bottom:1px solid #c8c8cc"></div>
<div class="t" style="left:470.0px;top:650.5px;font:13px/1 'Liberation Sans';color:#000;transform:scaleX(0.885);transform-origin:0 0;">1,4</div>
<div class="a" style="left:489px;top:647px;width:51px;height:20px;border-right:1px solid #c8c8cc;border-bottom:1px solid #c8c8cc"></div>
<div class="t" style="left:531.6px;top:650.5px;font:13px/1 'Liberation Sans';color:#000;transform:scaleX(0.746);transform-origin:0 0;">1</div>
<div class="a" style="left:540px;top:647px;width:44px;height:20px;border-right:1px solid #c8c8cc;border-bottom:1px solid #c8c8cc"></div>
<div class="t" style="left:565.0px;top:650.5px;font:13px/1 'Liberation Sans';color:#000;transform:scaleX(0.885);transform-origin:0 0;">1,4</div>
<div class="a" style="left:584px;top:647px;width:45px;height:20px;border-right:1px solid #c8c8cc;border-bottom:1px solid #c8c8cc"></div>
<div class="t" style="left:589.0px;top:650.5px;font:13px/1 'Liberation Sans';color:#000;transform:scaleX(0.930);transform-origin:0 0;">75,375</div>
<div class="a" style="left:629px;top:647px;width:50px;height:20px;border-right:1px solid #c8c8cc;border-bottom:1px solid #c8c8cc"></div>
<div class="t" style="left:632.2px;top:650.5px;font:13px/1 'Liberation Sans';color:#000;transform:scaleX(0.932);transform-origin:0 0;">105,525</div>
<div class="a" style="left:678px;top:573px;width:1px;height:96px;background:#000"></div>
<div class="a" style="left:728px;top:573px;width:18px;height:96px;background:repeating-conic-gradient(#f4f4f6 0 25%,#e4e4e8 0 50%) 0 0/2px 2px"></div>
<div class="btn" style="left:728px;top:574px;width:18px;height:17px;"></div>
<div class="a" style="left:733px;top:580px;border-left:4px solid transparent;border-right:4px solid transparent;border-bottom:4px solid #000"></div>
<div class="btn" style="left:728px;top:591px;width:18px;height:15px;"></div>
<div class="btn" style="left:728px;top:653px;width:18px;height:14px;"></div>
<div class="a" style="left:734px;top:659px;border-left:3px solid transparent;border-right:3px solid transparent;border-top:3px solid #000"></div>
<div class="a" style="left:752px;top:116px;width:242px;height:553px;border-left:1px solid #a0a0a4;border-top:1px solid #a0a0a4"></div>
<div class="a" style="left:753px;top:117px;width:240px;height:552px;border-left:1px solid #fff;border-top:1px solid #fff;border-right:1px solid #a0a0a4"></div>
<div class="t" style="left:762px;top:131px;font:12px/1 'Liberation Sans';color:#000;transform:scaleX(0.849);transform-origin:0 0;">Профиль</div>
<div class="fld" style="left:820px;top:127px;width:162px;height:20px"><div class="arr"></div></div>
<div class="t" style="left:824px;top:132px;font:12px/1 'Liberation Sans';color:#000;transform:scaleX(0.883);transform-origin:0 0;">REHAU EURO-60</div>
<div class="t" style="left:762px;top:157px;font:12px/1 'Liberation Sans';color:#000;transform:scaleX(0.860);transform-origin:0 0;">С-пакет</div>
<div class="fld" style="left:820px;top:153px;width:162px;height:20px"><div class="arr"></div></div>
<div class="t" style="left:824px;top:158px;font:12px/1 'Liberation Sans';color:#000;transform:scaleX(0.923);transform-origin:0 0;">4-16-4</div>
<div class="t" style="left:821px;top:182px;font:11px/1 'Liberation Sans';color:#000;transform:scaleX(0.909);transform-origin:0 0;">Ширина</div>
<div class="t" style="left:897px;top:182px;font:11px/1 'Liberation Sans';color:#000;transform:scaleX(0.953);transform-origin:0 0;">Высота</div>
<div class="fld" style="left:820px;top:197px;width:66px;height:18px;"></div>
<div class="t" style="left:823px;top:200px;font:12px/1 'Liberation Sans';color:#a0a0a4;transform:scaleX(1.011);transform-origin:0 0;">1330</div>
<div class="t" style="left:887px;top:198px;font:12px/1 'Liberation Sans';color:#000;">X</div>
<div class="fld" style="left:896px;top:197px;width:66px;height:18px;"></div>
<div class="t" style="left:899px;top:200px;font:12px/1 'Liberation Sans';color:#a0a0a4;transform:scaleX(1.011);transform-origin:0 0;">1430</div>
<div class="t" style="left:820px;top:221px;font:11px/1 'Liberation Sans';color:#000;transform:scaleX(0.982);transform-origin:0 0;">Количество</div>
<div class="fld" style="left:820px;top:235px;width:64px;height:19px;"></div>
<div class="t" style="left:823px;top:239px;font:12px/1 'Liberation Sans';color:#000;transform:scaleX(0.748);transform-origin:0 0;">1</div>
<div class="grp" style="left:762px;top:268px;width:220px;height:298px"></div>
<div class="a face" style="left:769px;top:262px;width:84px;height:12px"></div>
<div class="t" style="left:771px;top:263px;font:11px/1 'Liberation Sans';color:#000;">Доп параметры</div>
<div class="t" style="left:774px;top:284px;font:11px/1 'Liberation Sans';color:#000;transform:scaleX(0.973);transform-origin:0 0;">Цвет</div>
<div class="fld" style="left:811px;top:280px;width:156px;height:20px"><div class="arr"></div></div>
<div class="t" style="left:815px;top:285px;font:12px/1 'Liberation Sans';color:#000;transform:scaleX(0.904);transform-origin:0 0;">Белый</div>
<div class="t" style="left:774px;top:304px;font:11px/1 'Liberation Sans';color:#000;transform:scaleX(0.971);transform-origin:0 0;">Рама</div>
<div class="t" style="left:876px;top:304px;font:11px/1 'Liberation Sans';color:#000;transform:scaleX(0.974);transform-origin:0 0;">Створка</div>
<div class="fld" style="left:774px;top:317px;width:91px;height:20px"><div class="arr dis"></div></div>
<div class="t" style="left:777px;top:322px;font:12px/1 'Liberation Sans';color:#a0a0a4;transform:scaleX(0.874);transform-origin:0 0;">554002</div>
<div class="fld" style="left:876px;top:317px;width:91px;height:20px"><div class="arr dis"></div></div>
<div class="t" style="left:879px;top:322px;font:12px/1 'Liberation Sans';color:#a0a0a4;transform:scaleX(0.874);transform-origin:0 0;">554012</div>
<div class="t" style="left:774px;top:342px;font:11px/1 'Liberation Sans';color:#000;transform:scaleX(0.971);transform-origin:0 0;">Импост</div>
<div class="t" style="left:876px;top:342px;font:11px/1 'Liberation Sans';color:#000;transform:scaleX(0.932);transform-origin:0 0;">Штульп</div>
<div class="fld" style="left:774px;top:355px;width:91px;height:20px"><div class="arr dis"></div></div>
<div class="t" style="left:777px;top:360px;font:12px/1 'Liberation Sans';color:#a0a0a4;transform:scaleX(0.874);transform-origin:0 0;">554022</div>
<div class="fld" style="left:876px;top:355px;width:91px;height:20px"><div class="arr dis"></div></div>
<div class="t" style="left:879px;top:360px;font:12px/1 'Liberation Sans';color:#a0a0a4;transform:scaleX(0.874);transform-origin:0 0;">554230</div>
<div class="t" style="left:774px;top:390px;font:11px/1 'Liberation Sans';color:#000;transform:scaleX(0.947);transform-origin:0 0;">Штапик</div>
<div class="fld" style="left:774px;top:402px;width:91px;height:20px"><div class="arr"></div></div>
<div class="t" style="left:774px;top:429px;font:11px/1 'Liberation Sans';color:#000;">Упл.створки</div>
<div class="t" style="left:876px;top:429px;font:11px/1 'Liberation Sans';color:#000;transform:scaleX(1.021);transform-origin:0 0;">Упл. пакета</div>
<div class="fld" style="left:774px;top:441px;width:91px;height:20px"><div class="arr"></div></div>
<div class="t" style="left:778px;top:446px;font:12px/1 'Liberation Sans';color:#000;transform:scaleX(0.900);transform-origin:0 0;">Черный</div>
<div class="fld" style="left:876px;top:441px;width:91px;height:20px"><div class="arr"></div></div>
<div class="t" style="left:880px;top:446px;font:12px/1 'Liberation Sans';color:#000;transform:scaleX(0.900);transform-origin:0 0;">Черный</div>
<div class="t" style="left:774px;top:476px;font:11px/1 'Liberation Sans';color:#000;transform:scaleX(0.941);transform-origin:0 0;">Ручка</div>
<div class="fld" style="left:774px;top:488px;width:195px;height:20px"><div class="arr"></div></div>
<div class="t" style="left:778px;top:493px;font:12px/1 'Liberation Sans';color:#000;transform:scaleX(0.892);transform-origin:0 0;">Ручка оконная бел</div>
<div class="t" style="left:774px;top:522px;font:11px/1 'Liberation Sans';color:#000;transform:scaleX(0.959);transform-origin:0 0;">Сложность</div>
<div class="fld" style="left:774px;top:535px;width:193px;height:20px"><div class="arr"></div></div>
<div class="t" style="left:762px;top:577px;font:11px/1 'Liberation Sans';color:#000;transform:scaleX(0.960);transform-origin:0 0;">Примечания</div>
<div class="fld" style="left:762px;top:589px;width:220px;height:61px;"></div>
<div class="a face" style="left:0;top:686px;width:1000px;height:34px"></div>
<div class="a" style="left:0;top:686px;width:1000px;height:1px;background:#fff"></div>
<div class="a" style="left:0;top:688px;width:1000px;height:1px;background:#a0a0a4"></div>
<div class="t" style="left:10px;top:699px;font:12px/1 'Liberation Sans';color:#000;transform:scaleX(0.930);transform-origin:0 0;">Открытые заказы</div>
<div class="btn" style="left:104px;top:693px;width:72px;height:25px;"></div>
<div class="t" style="left:136.7px;top:699px;font:12px/1 'Liberation Sans';color:#000;">0</div>
<div class="a" style="left:0;top:720px;width:1000px;height:30px;background:linear-gradient(to bottom,#1f3f9f 0,#2545a5 1px,#a6d3f7 2px,#80c0ec 3px,#70ace6 10px,#5a98e0 16px,#3a7ad2 17px,#3575cf 20px,#2b5bbd 28px,#203f9f 30px)"></div>
<div class="a" style="left:0;top:720px;width:86px;height:30px;border-radius:0 12px 12px 0;background:linear-gradient(to bottom,#3b9b3b 0,#7cc97c 2px,#4db84d 6px,#2f9e2f 14px,#1ea41e 24px,#26a426 30px)"></div>
<div class="a" style="left:12px;top:728px;width:6px;height:6px;background:#f05a24;transform:skewY(-8deg)"></div>
<div class="a" style="left:19px;top:727px;width:6px;height:6px;background:#7cbd3a;transform:skewY(-8deg)"></div>
<div class="a" style="left:11px;top:735px;width:6px;height:6px;background:#2d8fe0;transform:skewY(-8deg)"></div>
<div class="a" style="left:18px;top:734px;width:6px;height:6px;background:#f7c21a;transform:skewY(-8deg)"></div>
<div class="t" style="left:26px;top:727px;font:italic bold 17px/1 'Liberation Sans';color:#fff;transform:scaleX(0.923);transform-origin:0 0;text-shadow:1px 1px #1a5a1a;">пуск</div>
<div class="a" style="left:96px;top:725px;width:152px;height:23px;border-radius:3px;background:linear-gradient(to bottom,#5fa0f5,#3c81ee 40%,#3a78e6);border:1px solid #2a5cc8"></div>
<div class="a" style="left:104px;top:728px;width:14px;height:14px;border-radius:50%;background:radial-gradient(circle at 45% 35%,#ff4040,#d80c0c 60%,#a00000)"></div>
<div class="a" style="left:109px;top:730px;width:4px;height:10px;border-radius:50%;background:#4a8ae8"></div>
<div class="t" style="left:122px;top:731px;font:11px/1 'Liberation Sans';color:#fff;transform:scaleX(0.974);transform-origin:0 0;">Стоимость метало-п...</div>
<div class="a" style="left:251px;top:724px;width:155px;height:24px;border-radius:3px;background:linear-gradient(to bottom,#1c3f9a,#1e4aa8 50%,#1d48a6);border:1px solid #15306e"></div>
<div class="a" style="left:262px;top:728px;width:8px;height:11px;background:#1ee8f0;border:1px solid #fff"></div>
<div class="a" style="left:267px;top:731px;width:8px;height:12px;background:#1ee8f0;border:1px solid #fff"></div>
<div class="t" style="left:281px;top:731px;font:11px/1 'Liberation Sans';color:#fff;transform:scaleX(0.934);transform-origin:0 0;">V02plus-АлНат</div>
<div class="a" style="left:873px;top:729px;width:16px;height:13px;background:#2c5bc0"></div>
<div class="t" style="left:873.4px;top:730px;font:11px/1 'Liberation Sans';color:#fff;">EN</div>
<div class="a" style="left:907px;top:720px;width:93px;height:30px;background:linear-gradient(to bottom,#3d7fe0 0,#e4effb 1px,#d6e6f8 6px,#bcd5f3 20px,#a9c8ef 30px);border-left:1px solid #7fb0ec"></div>
<div class="a" style="left:900px;top:728px;width:16px;height:16px;border-radius:50%;background:radial-gradient(circle at 50% 40%,#ffffff,#c4dcf8 60%,#5d92e0);box-shadow:0 0 0 1px #e8f0fc"></div>
<svg class="a" style="left:900px;top:728px" width="16" height="16"><polyline points="9.5,4 5.5,8 9.5,12" fill="none" stroke="#1d4faa" stroke-width="1.8"/></svg>
<div class="a" style="left:924px;top:728px;width:11px;height:9px;background:linear-gradient(#c8c8c8,#6a6a6a);border:1px solid #505050"></div>
<div class="a" style="left:919px;top:732px;width:11px;height:9px;background:linear-gradient(#d0d0d0,#707070);border:1px solid #505050"></div>
<div class="a" style="left:922px;top:741px;width:5px;height:2px;background:#505050"></div>
<div class="t" style="left:944px;top:728px;font:bold 16px/1 'Liberation Serif';color:#0a1a80;transform:scaleX(1.500);transform-origin:0 0;">13</div>
<div class="t" style="left:969px;top:726.5px;font:bold 11px/1 'Liberation Serif';color:#0a1a80;transform:scaleX(1.545);transform-origin:0 0;">54</div>
<div class="t" style="left:971px;top:738px;font:italic bold 9px/1 'Liberation Sans';color:#0a1a80;transform:scaleX(0.964);transform-origin:0 0;">Вт</div>
<svg class="a" style="left:0;top:0" width="1000" height="750" viewBox="0 0 1000 750"><g fill="none" stroke="#f8143c" stroke-width="1.8" stroke-linecap="round" stroke-linejoin="round"><path d="M794,129.5 C800,127 805,125 808,124 C815,121 825,120 835,119.5 C870,118.5 900,118 942,117 C975,117 990,125 996,144 C1000,165 995,185 986,195 C975,210 960,222 931,230 C900,233 870,231 839,223 C815,213 806,192 804.5,172 C803,150 805,135 808,128 C810,124 812,121 816,119"/><path d="M134.5,418.5 L109.5,418.5 L85.2,418.2 C82,417 81,416 79.8,415.8 C75,414.5 72,414.5 69,414.5 C55,414.5 48,414.8 42,415 C35,416 31,417 28.5,417.8 C25,420 24,421 23.8,422.5 C23,430 23,435 23.1,438.8 C23,450 23.5,456 23.8,461.7 C24.5,470 25,475 25.8,477.9 C28,481 30,482.5 32.6,483.3 C40,486 45,486.5 48.8,486.7 C60,487.4 70,487.4 82.5,487.4 C95,487.4 105,487.2 116.3,486.7 C122,485.5 127,484.5 129.8,483.3 C134,481 136,479 137.2,476.5 C138,470 138,465 137.9,461.7 C137.5,455 137,452 136.5,448.2 C135.5,440 134.5,436 133.8,432 C133,427 132,424 131.1,421.2 L130.4,419.9"/><path d="M397.6,676 L406,687 L440,684.8 C500,683 560,681 590,679.7 C620,677 650,674 664.9,672.9 C690,669 710,666 733,659.3 C744,650 744,635 743,628.6 C740,610 736,600 726,581 C715,565 700,556 685.3,553.8 C670,550 650,547 624,546.3 C590,546 550,547 528.8,548.7 L522,550.6 L460,550.6 C400,550.6 340,550.6 320,551 L312,551.6 L300,554 L286,555 L272,553 L260,551 L240,550.4 L198,550.4 L186,553 L180,554.4 L168,556 L162,561 L154,566 L148,570 L140,574 L132,577 L126,582 C124.5,600 124,610 125.5,615 C126,630 127,640 127.2,642.2 C129,652 131,658 134,662.7 C140,670 146,674 151,676.3 C170,684 185,687 195.2,688.2 C230,690 260,690 270,689.9 C300,690 320,690 338,689.9 C360,689 380,688 399.3,688.2"/><path d="M273,557 L294,557"/></g></svg>
</body></html>
